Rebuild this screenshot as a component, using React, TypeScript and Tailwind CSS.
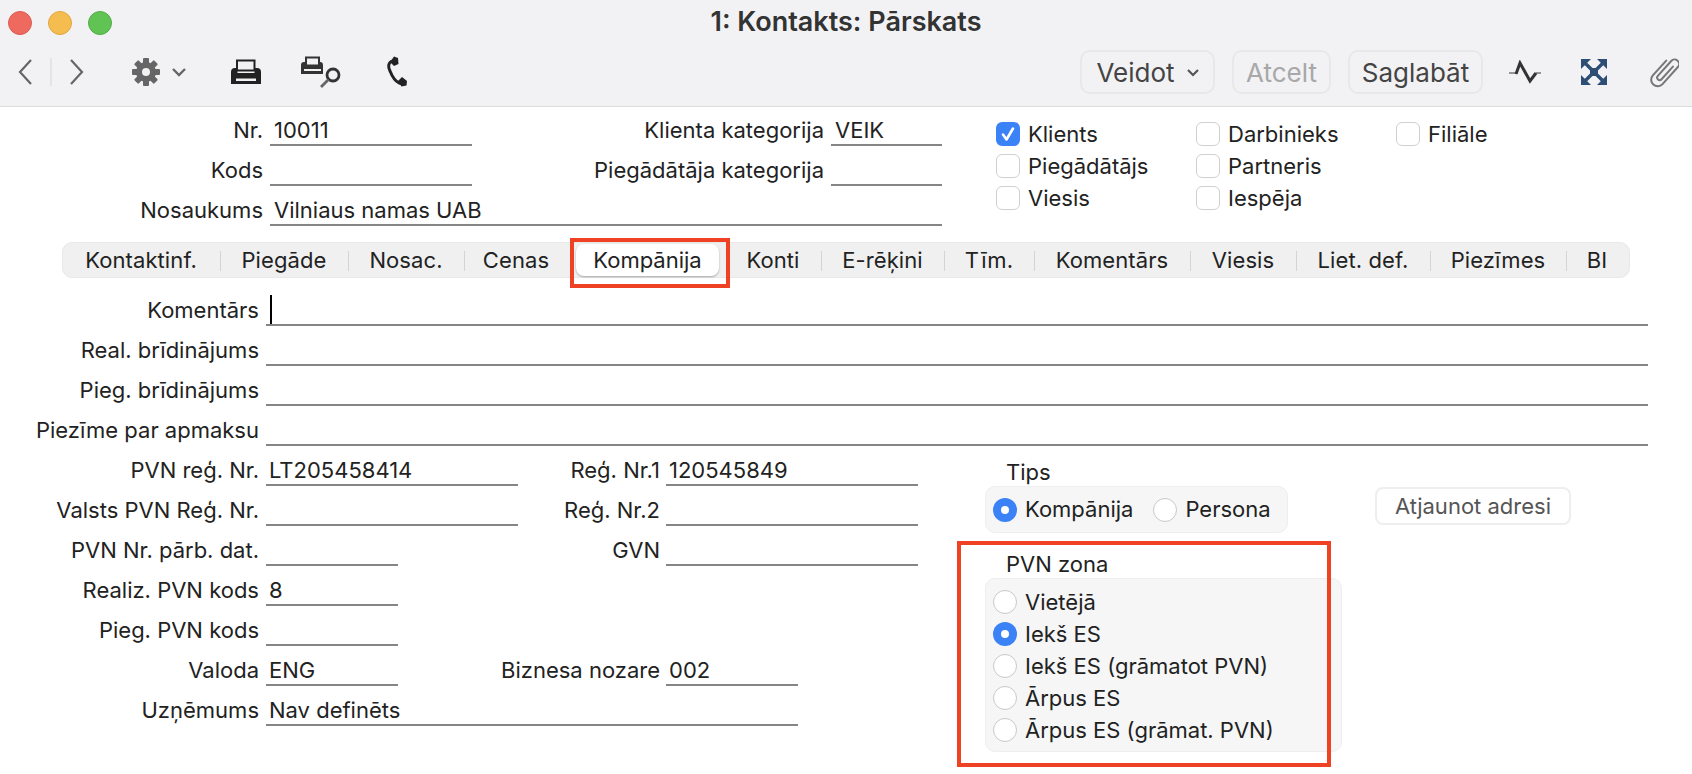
import React from "react";

const font = { fontFamily: "Inter, 'Liberation Sans', sans-serif" };

function Field({ label, value, labelW, lineW, gap = "gap-[7px]", pad = "pl-[4px]", cursor }: { label: string; value?: string; labelW: string; lineW: string; gap?: string; pad?: string; cursor?: boolean }) {
  return (
    <div className={`flex items-end ${gap} h-[40px] shrink-0`}>
      <div className={`${labelW} h-[28px] text-right leading-[24px] whitespace-nowrap`}>{label}</div>
      <div className={`${lineW} h-[28px] border-b-2 border-[#858585] ${pad} leading-[24px] whitespace-nowrap relative`}>
        {cursor ? <span className="absolute left-[4px] bottom-0 h-[29px] w-[2px] bg-black" /> : null}
        {value}
      </div>
    </div>
  );
}

function Check({ label, checked }: { label: string; checked?: boolean }) {
  return (
    <div className="flex items-center gap-[8px] h-[32px]">
      {checked ? (
        <div className="w-[24px] h-[24px] rounded-[6px] bg-[#3b82f6] flex items-center justify-center">
          <svg width="18" height="18" viewBox="0 0 18 18" fill="none">
            <path d="M4 9.5 L7.5 14.5 L14 3.5" stroke="white" strokeWidth="2.6" strokeLinecap="round" strokeLinejoin="round" />
          </svg>
        </div>
      ) : (
        <div className="w-[24px] h-[24px] rounded-[6px] bg-white border border-[#d0d0d0]" />
      )}
      <span className="leading-[26px] whitespace-nowrap">{label}</span>
    </div>
  );
}

function Radio({ label, checked }: { label: string; checked?: boolean }) {
  return (
    <div className="flex items-center gap-[8px] h-[32px]">
      {checked ? (
        <div className="w-[24px] h-[24px] rounded-full bg-[#3b82f6] flex items-center justify-center">
          <div className="w-[8px] h-[8px] rounded-full bg-white" />
        </div>
      ) : (
        <div className="w-[24px] h-[24px] rounded-full bg-white border border-[#c8c8c8]" />
      )}
      <span className="whitespace-nowrap">{label}</span>
    </div>
  );
}

function Tab({ label, w, sep = true }: { label: string; w: string; sep?: boolean }) {
  return (
    <div className={`${w} h-full flex items-center justify-center relative shrink-0`}>
      <span className="whitespace-nowrap tracking-[0.1px] pr-[2px] pt-[1px]">{label}</span>
      {sep ? <span className="absolute right-0 top-[8px] h-[20px] w-px bg-[#d4d4d4]" /> : null}
    </div>
  );
}

function ToolButton({ children, w, dim }: { children: React.ReactNode; w: string; dim?: boolean }) {
  return (
    <div className={`${w} h-[44px] rounded-[10px] border-2 border-[#e8e8ea] flex items-center justify-center text-[26px] ${dim ? "text-[#a8a8a8]" : "text-[#444]"}`}>
      {children}
    </div>
  );
}

function Gear() {
  return (
    <svg width="28" height="28" viewBox="0 0 28 28" fill="#666">
      <rect x="11" y="0" width="6" height="28" rx="1" />
      <rect x="11" y="0" width="6" height="28" rx="1" transform="rotate(45 14 14)" />
      <rect x="11" y="0" width="6" height="28" rx="1" transform="rotate(90 14 14)" />
      <rect x="11" y="0" width="6" height="28" rx="1" transform="rotate(135 14 14)" />
      <circle cx="14" cy="14" r="10" />
      <circle cx="14" cy="14" r="4" fill="#f2f2f5" />
    </svg>
  );
}

function Printer() {
  return (
    <svg width="32" height="26" viewBox="0 0 32 26">
      <path d="M7 1.5h17.5v10H7z" fill="#f2f2f5" stroke="#222" strokeWidth="2" />
      <path d="M5 9h2.5v5h17V9H27a4 4 0 0 1 4 4v12H1V13a4 4 0 0 1 4-4z" fill="#222" />
      <rect x="6" y="19.5" width="20" height="2.5" fill="#f2f2f5" />
    </svg>
  );
}

function PrintPreview() {
  return (
    <svg width="42" height="32" viewBox="0 0 42 32">
      <path d="M6 1.5h13v8H6z" fill="#f2f2f5" stroke="#333" strokeWidth="2" />
      <path d="M4 6h2v4h13V6h2a3 3 0 0 1 2 3v9H1V9a3 3 0 0 1 3-3z" fill="#333" />
      <rect x="4" y="13" width="17" height="2" fill="#f2f2f5" />
      <circle cx="33" cy="19" r="6" fill="none" stroke="#333" strokeWidth="2.8" />
      <path d="M28.5 23.5L21 31" stroke="#666" strokeWidth="2.8" />
    </svg>
  );
}

function Phone() {
  return (
    <svg width="22" height="32" viewBox="0 0 22 32" fill="none">
      <path d="M6 5 C2 7 2 11 4 15 C6 20 9 25 13 27 C15 28 17 28 18 27" stroke="#222" strokeWidth="3" />
      <path d="M4 6 L8 0.5 L12 2 L12.5 8 L8 10z" fill="#222" />
      <path d="M12 25 L16 21 L21 25 L20.5 29.5 L15.5 30.5z" fill="#222" />
    </svg>
  );
}

function Wave() {
  return (
    <svg width="32" height="24" viewBox="0 0 32 24" fill="none">
      <path d="M0 13 H8 M27 13 H32" stroke="#777" strokeWidth="1.4" />
      <path d="M7 14 L11 3 L21 21 L27 13" stroke="#333" strokeWidth="3" strokeLinejoin="miter" />
    </svg>
  );
}

function Expand() {
  return (
    <svg width="26" height="26" viewBox="0 0 26 26" fill="#2d4f75">
      <path d="M0 0h10L0 10z" />
      <path d="M26 0H16L26 10z" />
      <path d="M0 26h10L0 16z" />
      <path d="M26 26H16L26 16z" />
      <path d="M3 3L23 23M23 3L3 23" stroke="#2d4f75" strokeWidth="3.4" />
      <rect x="9" y="9" width="8" height="8" />
    </svg>
  );
}

function Clip() {
  return (
    <svg width="30" height="32" viewBox="0 0 30 32" fill="none" stroke="#777" strokeWidth="2" strokeLinecap="round">
      <g transform="rotate(42 15 16)">
        <path d="M9 7 V27 A6.5 6.5 0 0 0 22 27 V4 A4.5 4.5 0 0 0 13 4 V24 A2.5 2.5 0 0 0 18 24 V7" transform="translate(0 -1)" />
      </g>
    </svg>
  );
}

export default function App() {
  return (
    <div className="w-[1692px] h-[774px] overflow-hidden bg-white text-[#222] text-[22px]" style={font}>
      <header className="h-[107px] bg-[#f2f2f5] border-b border-[#dcdcdc]">
        <div className="h-[44px] grid grid-cols-[1fr_auto_1fr] items-center px-[8px] pt-[1px]">
          <div className="flex gap-[16px]">
            <div className="w-[24px] h-[24px] rounded-full bg-[#ee6a5f] border border-[#dd5a50]" />
            <div className="w-[24px] h-[24px] rounded-full bg-[#f5bd4f] border border-[#e0a73c]" />
            <div className="w-[24px] h-[24px] rounded-full bg-[#61c354] border border-[#52ad46]" />
          </div>
          <div className="text-[27px] font-semibold text-[#333]">1: Kontakts: Pārskats</div>
          <div />
        </div>
        <div className="h-[50px] mt-[3px] flex items-center">
          <svg className="ml-[18px]" width="14" height="26" viewBox="0 0 14 26" fill="none"><path d="M13 1 L2 13 L13 25" stroke="#666" strokeWidth="2.2" /></svg>
          <div className="ml-[18px] h-[28px] w-[2px] bg-[#e4e4e6]" />
          <svg className="ml-[18px]" width="14" height="26" viewBox="0 0 14 26" fill="none"><path d="M1 1 L12 13 L1 25" stroke="#666" strokeWidth="2.2" /></svg>
          <div className="ml-[48px]"><Gear /></div>
          <svg className="ml-[12px]" width="14" height="9" viewBox="0 0 14 9" fill="none"><path d="M1 1 L7 7 L13 1" stroke="#666" strokeWidth="2.4" /></svg>
          <div className="ml-[44px]"><Printer /></div>
          <div className="ml-[38px]"><PrintPreview /></div>
          <div className="ml-[44px]"><Phone /></div>
          <div className="ml-[672px]">
            <ToolButton w="w-[135px]">
              Veidot
              <svg className="ml-[12px] mt-[2px]" width="12" height="8" viewBox="0 0 12 8" fill="none"><path d="M1 1 L6 6 L11 1" stroke="#555" strokeWidth="2.2" /></svg>
            </ToolButton>
          </div>
          <div className="ml-[17px]"><ToolButton w="w-[99px]" dim>Atcelt</ToolButton></div>
          <div className="ml-[17px]"><ToolButton w="w-[135px]">Saglabāt</ToolButton></div>
          <div className="ml-[26px]"><Wave /></div>
          <div className="ml-[40px]"><Expand /></div>
          <div className="ml-[42px]"><Clip /></div>
        </div>
      </header>

      <main className="-mt-[1px]">
        <section className="flex">
          <div className="w-[996px] shrink-0">
            <div className="flex">
              <Field label="Nr." value="10011" labelW="w-[263px]" lineW="w-[202px]" />
              <Field label="Klienta kategorija" value="VEIK" labelW="w-[352px]" lineW="w-[111px]" gap="gap-[7px]" />
            </div>
            <div className="flex">
              <Field label="Kods" labelW="w-[263px]" lineW="w-[202px]" />
              <Field label="Piegādātāja kategorija" labelW="w-[352px]" lineW="w-[111px]" />
            </div>
            <Field label="Nosaukums" value="Vilniaus namas UAB" labelW="w-[263px]" lineW="w-[672px]" />
          </div>
          <div className="grid grid-cols-[200px_200px_200px] pt-[12px] content-start">
            <Check label="Klients" checked />
            <Check label="Darbinieks" />
            <Check label="Filiāle" />
            <Check label="Piegādātājs" />
            <Check label="Partneris" />
            <div />
            <Check label="Viesis" />
            <Check label="Iespēja" />
          </div>
        </section>

        <nav className="ml-[62px] mt-[16px] w-[1568px] h-[36px] rounded-[10px] bg-[#f0f0f0] border border-[#e8e8e8] flex items-center">
          <Tab label="Kontaktinf." w="w-[158px]" />
          <Tab label="Piegāde" w="w-[128px]" />
          <Tab label="Nosac." w="w-[116px]" />
          <Tab label="Cenas" w="w-[104px]" sep={false} />
          <div className="relative ml-[7px] mr-[7px] w-[143px] h-[32px] rounded-[8px] bg-white shadow-[0_1px_2px_rgba(0,0,0,0.3)] flex items-center justify-center shrink-0">
            <span className="pt-[1px]">Kompānija</span>
            <div className="absolute -left-[6px] -top-[6px] w-[160px] h-[50px] border-4 border-[#ef4123]" />
          </div>
          <Tab label="Konti" w="w-[96px]" />
          <Tab label="E-rēķini" w="w-[123px]" />
          <Tab label="Tīm." w="w-[90px]" />
          <Tab label="Komentārs" w="w-[156px]" />
          <Tab label="Viesis" w="w-[106px]" />
          <Tab label="Liet. def." w="w-[134px]" />
          <Tab label="Piezīmes" w="w-[136px]" />
          <Tab label="BI" w="w-[62px]" sep={false} />
        </nav>

        <section className="mt-[8px]">
          <Field label="Komentārs" labelW="w-[259px]" lineW="w-[1382px]" cursor />
          <Field label="Real. brīdinājums" labelW="w-[259px]" lineW="w-[1382px]" />
          <Field label="Pieg. brīdinājums" labelW="w-[259px]" lineW="w-[1382px]" />
          <Field label="Piezīme par apmaksu" labelW="w-[259px]" lineW="w-[1382px]" />
        </section>

        <section className="flex">
          <div className="w-[918px] shrink-0">
            <div className="flex">
              <Field label="PVN reģ. Nr." value="LT205458414" labelW="w-[259px]" lineW="w-[252px]" gap="gap-[7px]" pad="pl-[3px]" />
              <Field label="Reģ. Nr.1" value="120545849" labelW="w-[142px]" lineW="w-[252px]" gap="gap-[6px]" pad="pl-[3px]" />
            </div>
            <div className="flex">
              <Field label="Valsts PVN Reģ. Nr." labelW="w-[259px]" lineW="w-[252px]" />
              <Field label="Reģ. Nr.2" labelW="w-[142px]" lineW="w-[252px]" gap="gap-[6px]" />
            </div>
            <div className="flex">
              <Field label="PVN Nr. pārb. dat." labelW="w-[259px]" lineW="w-[132px]" />
              <Field label="GVN" labelW="w-[262px]" lineW="w-[252px]" gap="gap-[6px]" />
            </div>
            <Field label="Realiz. PVN kods" value="8" labelW="w-[259px]" lineW="w-[132px]" pad="pl-[3px]" />
            <Field label="Pieg. PVN kods" labelW="w-[259px]" lineW="w-[132px]" />
            <div className="flex">
              <Field label="Valoda" value="ENG" labelW="w-[259px]" lineW="w-[132px]" pad="pl-[3px]" />
              <Field label="Biznesa nozare" value="002" labelW="w-[262px]" lineW="w-[132px]" gap="gap-[6px]" pad="pl-[3px]" />
            </div>
            <Field label="Uzņēmums" value="Nav definēts" labelW="w-[259px]" lineW="w-[532px]" pad="pl-[3px]" />
          </div>

          <div className="ml-[67px] pt-[14px]">
            <div className="pl-[21px] h-[26px] leading-[24px]">Tips</div>
            <div className="flex items-start">
              <div className="w-[303px] h-[47px] rounded-[10px] bg-[#f6f6f6] border border-[#eeeeee] pl-[7px] flex items-center gap-[20px]">
                <Radio label="Kompānija" checked />
                <Radio label="Persona" />
              </div>
              <div className="ml-[87px] mt-[1px] w-[196px] h-[38px] rounded-[8px] border-2 border-[#eeeeee] flex items-center justify-center text-[#555]">
                Atjaunot adresi
              </div>
            </div>
            <div className="relative mt-[19px]">
              <div className="pl-[21px] h-[26px] leading-[24px]">PVN zona</div>
              <div className="w-[357px] rounded-[10px] bg-[#f6f6f6] border border-[#eeeeee] pl-[7px] pt-[7px] pb-[5px]">
                <Radio label="Vietējā" />
                <Radio label="Iekš ES" checked />
                <Radio label="Iekš ES (grāmatot PVN)" />
                <Radio label="Ārpus ES" />
                <Radio label="Ārpus ES (grāmat. PVN)" />
              </div>
              <div className="absolute -left-[28px] -top-[11px] w-[374px] h-[226px] border-4 border-[#ef4123]" />
            </div>
          </div>
        </section>
      </main>
    </div>
  );
}
